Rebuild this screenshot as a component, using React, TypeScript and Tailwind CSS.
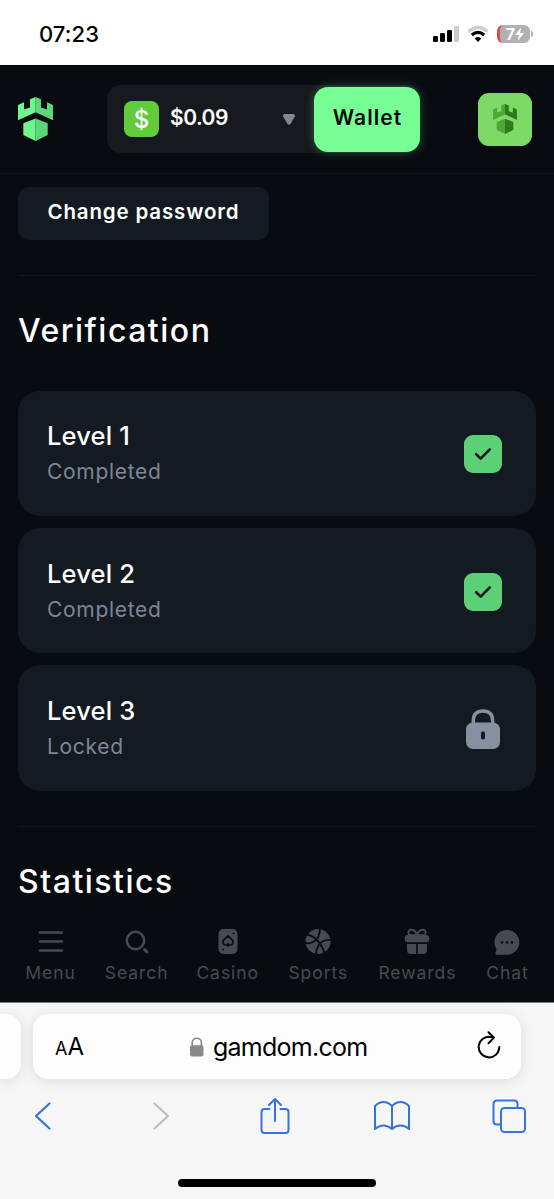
type Level = {
  name: string;
  status: string;
  locked?: boolean;
}

function Rook({ className, left, right }: { className: string; left: string; right: string }) {
  return (
    <svg className={className} viewBox="0 0 35 44">
      <path fill={left} d="M17.6 0L12 2.2V10.5L6 12.5V5.3L0 8V23.3L17.6 15.3Z" />
      <path fill={right} d="M17.5 0L23 2.2V10.5L29 12.5V5.3L35 8V23.3L17.5 15.3Z" />
      <path fill={left} d="M17.6 21.5L5.3 26.3V38L17.6 44Z" />
      <path fill={right} d="M17.5 21.5L29.7 26.3V38L17.5 44Z" />
    </svg>
  );
}

function StatusBar() {
  return (
    <div className="h-[65px] shrink-0 bg-white flex items-start justify-between pl-[39px] pr-[21px] pt-[20px]">
      <p className="text-[22px] leading-[28px] font-medium text-black tracking-[0.1px]">07:23</p>
      <div className="flex items-center gap-[8px] pt-[5px]">
        <svg className="w-[26px] h-[18px]" viewBox="0 0 26 18">
          <rect x="0" y="11" width="5" height="6" rx="1.3" />
          <rect x="7" y="8" width="5" height="9" rx="1.3" />
          <rect x="14" y="5" width="5" height="12" rx="1.3" />
          <rect x="21" y="1" width="5" height="16" rx="1.3" fill="#cbcbcb" />
        </svg>
        <svg className="w-[22px] h-[18px]" viewBox="0 0 22 18" fill="none">
          <path d="M1.4 6.4Q11-1.8 20.6 6.4" stroke="#cbcbcb" strokeWidth="3.2" />
          <path d="M4.8 10Q11 4.8 17.2 10" stroke="#000" strokeWidth="3.2" />
          <path d="M11 17L7.7 13.4Q11 10.8 14.3 13.4Z" fill="#000" />
        </svg>
        <div className="flex items-center">
          <div className="w-[33px] h-[18px] rounded-[6px] bg-[#b1b1b3] border-l-[3px] border-[#e5484d] flex items-center justify-center">
            <span className="text-[16px] leading-[18px] font-bold text-white">7</span>
            <svg className="w-[9px] h-[14px]" viewBox="0 0 9 14" fill="#fff">
              <path d="M6.3 0L0 8H4L2.6 14L9 6H5Z" />
            </svg>
          </div>
          <div className="w-[2px] h-[6px] ml-px rounded-r-full bg-[#b1b1b3]" />
        </div>
      </div>
    </div>
  );
}

function Header() {
  return (
    <div className="h-[109px] shrink-0 border-b border-[#11151a] flex items-center pl-[18px] pr-[22px]">
      <Rook className="w-[35px] h-[44px]" left="#70f58c" right="#5bd779" />
      <div className="ml-[54px] w-[313px] h-[68px] rounded-[14px] bg-[#16191e] flex items-center pl-[17px]">
        <div className="w-[35px] h-[36px] rounded-[8px] bg-[#62cb3b] flex items-center justify-center text-white text-[24px] leading-[24px] font-medium pt-[2px]">$</div>
        <p className="ml-[11px] w-[112px] text-[21px] font-semibold text-white tracking-[-0.5px] pb-[2px]">$0.09</p>
        <svg className="ml-px w-[12px] h-[11px]" viewBox="0 0 12 11" fill="#85868b">
          <path d="M1.8 0H10.2C11.8 0 12.5 1.6 11.6 3L7.6 9.7Q6 11.6 4.4 9.7L.4 3C-.5 1.6.2 0 1.8 0Z" />
        </svg>
        <div className="ml-[19px] w-[106px] h-[65px] shrink-0 rounded-[14px] bg-[#77ff95] shadow-[0_0_10px_#77ff9550] flex items-center justify-center">
          <span className="text-[21px] font-semibold text-[#060a0e] tracking-[1.1px] pl-px pb-[2px]">Wallet</span>
        </div>
      </div>
      <div className="ml-auto w-[54px] h-[53px] rounded-[11px] bg-[#7ddb65] flex items-center justify-center">
        <Rook className="w-[24px] h-[30px]" left="#4fa836" right="#2f7a1f" />
      </div>
    </div>
  );
}

function LevelCard({ level }: { level: Level }) {
  return (
    <div className="h-[125.4px] rounded-[22px] bg-[#141a21] flex items-center justify-between pl-[29px] pr-[34px]">
      <div className="flex flex-col pt-[2px]">
        <h2 className="text-[25.5px] leading-[36px] font-medium text-white tracking-[0.15px]">{level.name}</h2>
        <p className="text-[21px] leading-[36px] text-[#7f8696] tracking-[0.7px]">{level.status}</p>
      </div>
      {level.locked ? (
        <svg className="mt-[2px] w-[38px] h-[40px]" viewBox="0 0 38 40">
          <path d="M9.3 16V12Q9.3 2 19 2T28.7 12V16" fill="none" stroke="#8790a0" strokeWidth="3.4" />
          <rect x="2" y="13.5" width="34" height="26.5" rx="7" fill="#8790a0" />
          <rect x="17" y="22.5" width="4" height="8" rx="1.8" fill="#141a21" />
        </svg>
      ) : (
        <div className="mt-[2px] w-[38px] h-[38px] rounded-[9px] bg-[#5bd076] flex items-center justify-center">
          <svg className="w-[18px] h-[14px]" viewBox="0 0 18 14" fill="none" stroke="#141a21" strokeWidth="2.7" strokeLinecap="round" strokeLinejoin="round">
            <path d="M2.2 7.2L6.7 11.6L15.8 2.4" />
          </svg>
        </div>
      )}
    </div>
  );
}

function BottomNav() {
  const items = [
    {
      label: "Menu",
      width: "w-[51px]",
      icon: <path d="M3 4.5H25M3 13.5H25M3 22.5H25" stroke="#484a4f" strokeWidth="2.5" strokeLinecap="round" />
    },
    {
      label: "Search",
      width: "w-[62px]",
      icon: <g fill="none" stroke="#484a4f" strokeLinecap="round">
        <circle cx="12.5" cy="12.5" r="8.7" strokeWidth="2.5" />
        <path d="M21.5 21.5L24 24" strokeWidth="3" />
      </g>
    },
    {
      label: "Casino",
      width: "w-[61px]",
      icon: <g>
        <rect x="4.5" y="1" width="19" height="25" rx="5" fill="#484a4f" />
        <path d="M14 7.8L9.7 11.8Q7.8 15 10.5 16.8Q12.7 17.6 14 15.6Q15.3 17.6 17.5 16.8Q20.2 15 18.3 11.8ZM14 15.5V19" fill="none" stroke="#080c10" strokeWidth="1.7" strokeLinejoin="round" />
        <circle cx="19.5" cy="5.5" r="1" fill="#080c10" />
        <circle cx="9" cy="21.5" r="1" fill="#080c10" />
      </g>
    },
    {
      label: "Sports",
      width: "w-[61px]",
      icon: <g>
        <circle cx="14" cy="13.5" r="12.5" fill="#484a4f" />
        <path d="M16 0Q16 10 10 13.5T0 14M3 6.5Q15 9 21 26M28 12Q18 11 14.5 17.5T12.5 27" fill="none" stroke="#080c10" strokeWidth="1.8" />
      </g>
    },
    {
      label: "Rewards",
      width: "w-[78px]",
      icon: <g fill="#484a4f">
        <path d="M14 7C12 0 5 .5 5.3 5Q5.5 8 14 7ZM14 7C16 0 23 .5 22.7 5Q22.5 8 14 7Z" fill="none" stroke="#484a4f" strokeWidth="2" />
        <rect x="1.8" y="7" width="24.4" height="7.3" rx="3" />
        <path d="M4 16H13.2V26H8Q4 26 4 22ZM14.8 16H24V22Q24 26 20 26H14.8Z" />
      </g>
    },
    {
      label: "Chat",
      width: "w-[43px]",
      icon: <g>
        <path d="M14 2A12.3 12.3 0 1 1 14 26.7H3.2Q1.9 26.3 2.7 24.7L3.5 21A12.3 12.3 0 0 1 14 2Z" fill="#484a4f" />
        <circle cx="9" cy="14.5" r="1.3" fill="#080c10" />
        <circle cx="14" cy="14.5" r="1.3" fill="#080c10" />
        <circle cx="19" cy="14.5" r="1.3" fill="#080c10" />
      </g>
    }
  ];

  return (
    <div className="mt-auto h-[74px] shrink-0 flex justify-between px-[25px]">
      {items.map((item) => (
        <div key={item.label} className={`${item.width} flex flex-col items-center`}>
          <svg className="w-[28px] h-[28px] shrink-0" viewBox="0 0 28 28">{item.icon}</svg>
          <p className="mt-[5px] text-[17.5px] leading-[24px] text-[#484a4f] tracking-[0.95px] whitespace-nowrap">{item.label}</p>
        </div>
      ))}
    </div>
  );
}

function Safari() {
  return (
    <div className="h-[197px] shrink-0 bg-[#f6f6f6] border-t border-[#77797c] flex flex-col overflow-hidden">
      <div className="flex pt-[11px] gap-[12px]">
        <div className="w-[21px] h-[65px] rounded-r-[15px] bg-[#fdfdfd] shadow-[0_2px_14px_#0000001c]" />
        <div className="w-[488px] h-[65px] rounded-[15px] bg-[#fdfdfd] shadow-[0_2px_14px_#0000001c] flex items-center pl-[22px] pr-[20px] text-black">
          <p className="w-[134px] leading-[30px] pt-[3px]"><span className="text-[18px]">A</span><span className="text-[24px]">A</span></p>
          <svg className="w-[16px] h-[20px]" viewBox="0 0 16 20" fill="#88888d">
            <path d="M3.2 9V5.8C3.2-.3 12.4-.3 12.4 5.8V9" fill="none" stroke="#88888d" strokeWidth="1.6" />
            <rect x="1" y="8.3" width="13.5" height="11.2" rx="2.2" />
          </svg>
          <p className="ml-[8px] text-[25px] leading-[30px] tracking-[-0.75px]">gamdom.com</p>
          <svg className="mb-[3px] ml-auto w-[24px] h-[28px]" viewBox="0 0 24 28" fill="none" stroke="#000" strokeWidth="2" strokeLinecap="round" strokeLinejoin="round">
            <path d="M14.5 6.1A10.3 10.3 0 1 0 22.3 16M11.5 1.2L17 6.6L11.5 12.2M12 6H16.5" />
          </svg>
        </div>
      </div>
      <div className="mt-[17px] h-[40px] flex items-center justify-between pl-[33px] pr-[28px]">
        <svg className="w-[18px] h-[28px]" viewBox="0 0 18 28" fill="none" stroke="#3472df" strokeWidth="2.2" strokeLinecap="round" strokeLinejoin="round">
          <path d="M16.5 1.5L3 14L16.5 26.5" />
        </svg>
        <svg className="ml-[18px] w-[18px] h-[28px]" viewBox="0 0 18 28" fill="none" stroke="#bdbdbf" strokeWidth="2.2" strokeLinecap="round" strokeLinejoin="round">
          <path d="M3.5 1.5L17 14L3.5 26.5" />
        </svg>
        <svg className="ml-[8px] w-[30px] h-[38px]" viewBox="0 0 30 38" fill="none" stroke="#3472df" strokeWidth="2" strokeLinecap="round" strokeLinejoin="round">
          <path d="M9.5 12H4.5Q1.5 12 1.5 15V33Q1.5 36 4.5 36H25.5Q28.5 36 28.5 33V15Q28.5 12 25.5 12H20.5M15 24V2M9 8L15 2L21 8" />
        </svg>
        <svg className="ml-[2px] w-[36px] h-[32px]" viewBox="0 0 36 32" fill="none" stroke="#3472df" strokeWidth="2" strokeLinejoin="round">
          <path d="M18 6Q14 2 9.5 2T1 6V29Q5.5 25.5 9.5 25.5T18 29Q22 25.5 26.5 25.5T35 29V6Q31 2 26.5 2T18 6V29" />
        </svg>
        <svg className="w-[34px] h-[34px]" viewBox="0 0 34 34" fill="none" stroke="#3472df" strokeWidth="2">
          <path d="M25.5 9V5Q25.5 1.5 22 1.5H5Q1.5 1.5 1.5 5V22Q1.5 25.5 5 25.5H9" />
          <rect x="9" y="9" width="24" height="24" rx="3.5" />
        </svg>
      </div>
      <div className="mt-auto mb-[12px] w-[198px] h-[8px] rounded-full bg-black self-center" />
    </div>
  );
}

export default function App() {
  const levels: Level[] = [
    { name: "Level 1", status: "Completed" },
    { name: "Level 2", status: "Completed" },
    { name: "Level 3", status: "Locked", locked: true }
  ];

  return (
    <div className="w-[554px] h-[1199px] overflow-hidden bg-[#080c10] flex flex-col font-['Inter',sans-serif]">
      <StatusBar />
      <Header />
      <div className="flex flex-col px-[18px] pt-[13px]">
        <button className="w-[251px] h-[53px] rounded-[11px] bg-[#141a21] text-white text-[20.5px] font-semibold tracking-[0.85px] pb-[3px]">Change password</button>
        <div className="mt-[35px] h-px bg-[#13171b]" />
        <h1 className="mt-[35px] text-[32px] leading-[40px] font-medium text-white tracking-[1.5px]">Verification</h1>
        <div className="mt-[39.5px] flex flex-col gap-[12px]">
          {levels.map((level) => <LevelCard key={level.name} level={level} />)}
        </div>
        <div className="mt-[35px] h-px bg-[#13171b]" />
        <h1 className="mt-[35px] text-[32px] leading-[40px] font-medium text-white tracking-[1.5px]">Statistics</h1>
      </div>
      <BottomNav />
      <Safari />
    </div>
  );
}
